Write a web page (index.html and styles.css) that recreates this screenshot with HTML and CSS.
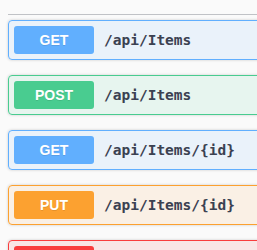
FILE: index.html
```html
<!DOCTYPE html>
<html lang="en">
<head>
    <meta charset="UTF-8">
    <meta name="viewport" content="width=device-width, initial-scale=1.0">
    <title>Items API</title>
    <link rel="stylesheet" href="styles.css">
</head>
<body>
    <div class="wrapper">
        <div class="tag-header"></div>

        <div class="opblock opblock-get">
            <div class="summary">
                <span class="method">GET</span>
                <span class="path">/api/Items</span>
            </div>
        </div>

        <div class="opblock opblock-post">
            <div class="summary">
                <span class="method">POST</span>
                <span class="path">/api/Items</span>
            </div>
        </div>

        <div class="opblock opblock-get">
            <div class="summary">
                <span class="method">GET</span>
                <span class="path">/api/Items/{id}</span>
            </div>
        </div>

        <div class="opblock opblock-put">
            <div class="summary">
                <span class="method">PUT</span>
                <span class="path">/api/Items/{id}</span>
            </div>
        </div>

        <div class="opblock opblock-delete">
            <div class="summary">
                <span class="method">DELETE</span>
                <span class="path">/api/Items/{id}</span>
            </div>
        </div>
    </div>
</body>
</html>
```

FILE: styles.css
```css
/* Page */
body {
    margin: 0;
    background-color: #fafafa;
    font-family: 'Liberation Sans', Arial, sans-serif;
    overflow: hidden;
}

.wrapper {
    width: 320px;
    padding-left: 8px;
}

/* Tag section divider */
.tag-header {
    height: 14px;
    border-bottom: 1px solid rgba(59, 65, 81, 0.3);
    margin-bottom: 5px;
}

/* Operation blocks */
.opblock {
    border: 1px solid #000;
    border-radius: 4px;
    box-shadow: 0 0 3px rgba(0, 0, 0, 0.19);
    margin-bottom: 15px;
}

.summary {
    display: flex;
    align-items: center;
    padding: 5px;
}

.method {
    min-width: 80px;
    padding: 6px 0;
    font-size: 14px;
    line-height: 16px;
    font-weight: 700;
    text-align: center;
    color: #fff;
    border-radius: 3px;
    text-shadow: 0 1px 0 rgba(0, 0, 0, 0.1);
}

.path {
    padding: 0 10px;
    font-family: 'DejaVu Sans Mono', monospace;
    font-size: 14.5px;
    font-weight: 700;
    color: #3b4151;
}

.opblock-get {
    background: rgba(97, 175, 254, 0.1);
    border-color: #61affe;
}

.opblock-get .method {
    background: #61affe;
}

.opblock-post {
    background: rgba(73, 204, 144, 0.1);
    border-color: #49cc90;
}

.opblock-post .method {
    background: #49cc90;
}

.opblock-put {
    background: rgba(252, 161, 48, 0.1);
    border-color: #fca130;
}

.opblock-put .method {
    background: #fca130;
}

.opblock-delete {
    background: rgba(249, 62, 62, 0.1);
    border-color: #f93e3e;
}

.opblock-delete .method {
    background: #f93e3e;
}
```
